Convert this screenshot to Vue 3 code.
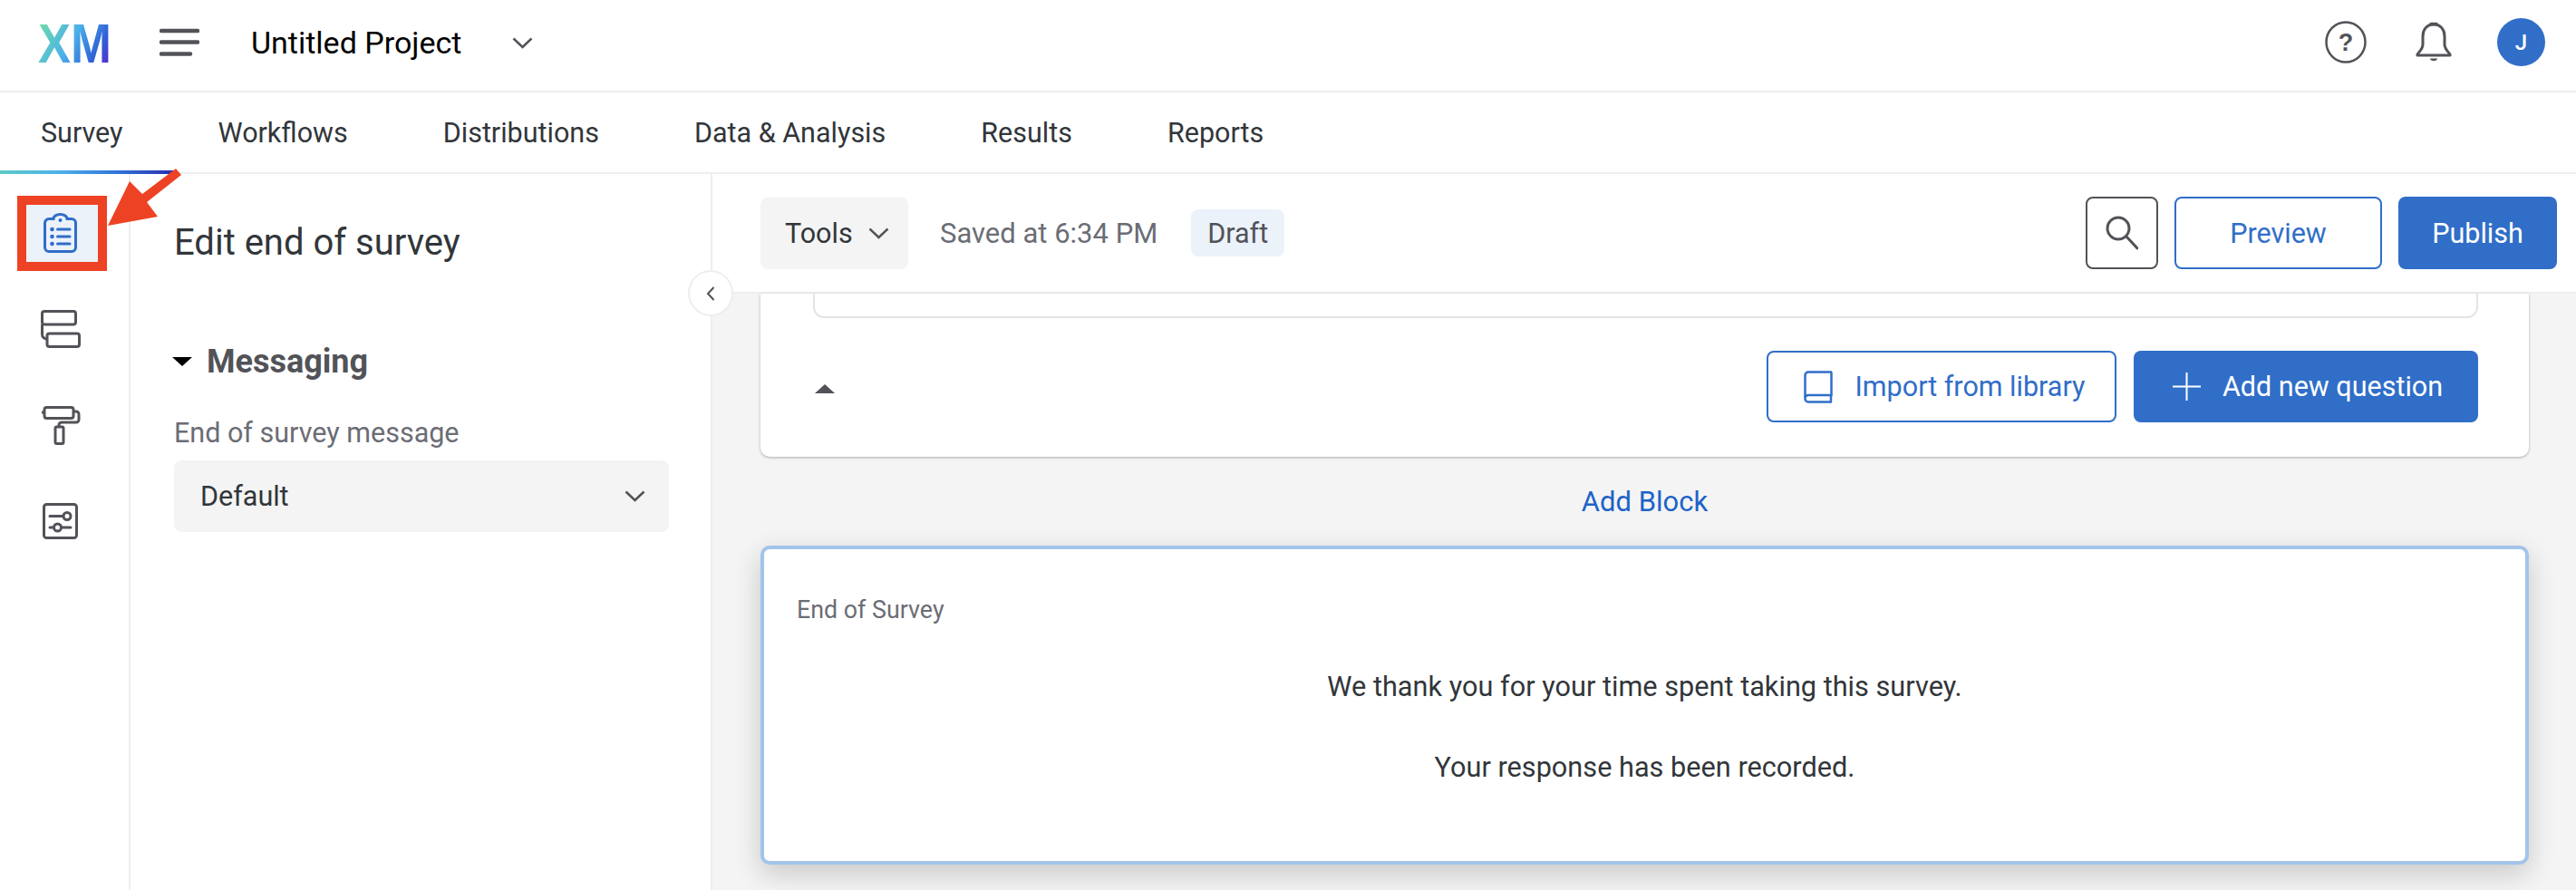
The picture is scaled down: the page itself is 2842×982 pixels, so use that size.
<script setup>
const tabs = ['Survey', 'Workflows', 'Distributions', 'Data & Analysis', 'Results', 'Reports']
</script>

<template>
  <div class="app">
    <header class="topbar">
      <svg class="logo" width="96" height="72" viewBox="0 0 96 72">
        <defs>
          <linearGradient id="xm" gradientUnits="userSpaceOnUse" x1="2" y1="12" x2="80" y2="56">
            <stop offset="0" stop-color="#6edbab" />
            <stop offset="0.45" stop-color="#4bb0ea" />
            <stop offset="0.8" stop-color="#2f5fd6" />
            <stop offset="1" stop-color="#5b27d0" />
          </linearGradient>
        </defs>
        <text x="0" y="56" font-family="Liberation Sans" font-weight="700" font-size="61" textLength="81" lengthAdjust="spacingAndGlyphs" fill="url(#xm)">XM</text>
      </svg>
      <svg class="burger" width="44" height="31" viewBox="0 0 44 31" fill="none" stroke="#525358" stroke-width="4.500" stroke-linecap="round">
        <path d="M2 3H42M2 15.500H42M2 28.500H34" />
      </svg>
      <span class="project">Untitled Project</span>
      <svg class="chev project-chev" width="23" height="13" viewBox="0 0 23 13"><path d="M1.500 1.500L11.500 11L21.500 1.500" /></svg>
      <div class="top-actions">
        <svg width="46" height="47" viewBox="0 0 46 47" fill="none">
          <ellipse cx="23" cy="23.500" rx="21.500" ry="22" stroke="#525358" stroke-width="2.500" />
          <text x="23" y="33" text-anchor="middle" font-family="Liberation Sans" font-weight="700" font-size="27" fill="#525358">?</text>
        </svg>
        <svg class="bell" width="40" height="45" viewBox="0 0 40 45" fill="none" stroke="#525358" stroke-width="3" stroke-linejoin="round">
          <path d="M20 3C12 3 8 9 8 16V25C8 30 4 33 2 36V37H38V36C36 33 32 30 32 25V16C32 9 28 3 20 3Z" />
          <path d="M17 2.500H23" stroke-width="3.500" stroke-linecap="round" />
          <path d="M16 40.500H24C24 44 16 44 16 40.500Z" fill="#525358" stroke="none" />
        </svg>
        <span class="avatar">J</span>
      </div>
    </header>

    <nav class="tabs">
      <span v-for="tab in tabs" :key="tab" class="tab">{{ tab }}</span>
      <i class="tab-line"></i>
    </nav>

    <div class="body">
      <aside class="rail">
        <div class="rail-item">
          <div class="rail-chip">
            <svg width="37" height="44" viewBox="0 0 37 44" fill="none" stroke="#306ec8" stroke-width="3" stroke-linecap="round">
              <path d="M11 6.500H6A4.500 4.500 0 0 0 1.500 11V38A4.500 4.500 0 0 0 6 42.500H31A4.500 4.500 0 0 0 35.500 38V11A4.500 4.500 0 0 0 31 6.500H26C26 3.500 22.500 1.500 18.500 1.500S11 3.500 11 6.500Z" />
              <path d="M15.500 18H29M15.500 26H29M15.500 34H29" />
              <g fill="#306ec8" stroke="none">
                <circle cx="18.500" cy="8" r="2" />
                <circle cx="9.500" cy="18" r="2.300" />
                <circle cx="9.500" cy="26" r="2.300" />
                <circle cx="9.500" cy="34" r="2.300" />
              </g>
            </svg>
          </div>
        </div>
        <div class="rail-item">
          <svg width="44" height="42" viewBox="0 0 44 42" fill="none" stroke="#525358" stroke-width="3">
            <rect x="1.500" y="1.500" width="37" height="14.500" rx="2.500" />
            <rect x="7" y="26" width="35.500" height="14.500" rx="2.500" />
            <path d="M1.500 16V27A5 5 0 0 0 7 32" />
          </svg>
        </div>
        <div class="rail-item">
          <svg width="44" height="43" viewBox="0 0 44 43" fill="none" stroke="#525358" stroke-width="3">
            <rect x="4" y="1.500" width="32" height="12" rx="2.500" />
            <path d="M36 6H39A3 3 0 0 1 42 9V15A3 3 0 0 1 39 18H23A3 3 0 0 0 20 21V23" />
            <rect x="16" y="23" width="9" height="18.500" rx="1.500" />
            <path d="M1 7H4" />
          </svg>
        </div>
        <div class="rail-item">
          <svg width="39" height="40" viewBox="0 0 39 40" fill="none" stroke="#525358" stroke-width="3">
            <rect x="1.500" y="1.500" width="36" height="37" rx="3" />
            <path d="M8 14.500H23M8 27H31" stroke-linecap="round" />
            <circle cx="27" cy="14.500" r="4" fill="#fff" />
            <circle cx="16.500" cy="27" r="4" fill="#fff" />
          </svg>
        </div>
        <svg class="arrow" width="90" height="70" viewBox="0 0 90 70">
          <path d="M0 64L24 15L38 29L75 1L81 8L43 38L55 54Z" fill="#ee4224" />
        </svg>
      </aside>

      <section class="panel">
        <h1 class="panel-title">Edit end of survey</h1>
        <div class="section-head">
          <i class="caret-down"></i>
          <span>Messaging</span>
        </div>
        <label class="field-label">End of survey message</label>
        <div class="select">
          <span>Default</span>
          <svg class="chev" width="23" height="13" viewBox="0 0 23 13"><path d="M1.500 1.500L11.500 11L21.500 1.500" /></svg>
        </div>
        <button class="collapse" aria-label="Collapse">
          <svg width="10" height="18" viewBox="0 0 10 18" fill="none" stroke="#525358" stroke-width="2"><path d="M8.500 2L2 9L8.500 16" /></svg>
        </button>
      </section>

      <main class="main">
        <div class="toolbar">
          <div class="tools">
            <span>Tools</span>
            <svg class="chev" width="23" height="13" viewBox="0 0 23 13"><path d="M1.500 1.500L11.500 11L21.500 1.500" /></svg>
          </div>
          <span class="saved">Saved at 6:34 PM</span>
          <span class="draft">Draft</span>
          <div class="toolbar-right">
            <div class="search-btn">
              <svg width="36" height="38" viewBox="0 0 36 38" fill="none" stroke="#525358" stroke-width="3" stroke-linecap="round">
                <circle cx="14" cy="14" r="12" />
                <path d="M23 23L35 36" />
              </svg>
            </div>
            <div class="btn outline preview">Preview</div>
            <div class="btn solid publish">Publish</div>
          </div>
        </div>

        <div class="scroll">
          <div class="card">
            <div class="inner-box"></div>
            <div class="card-foot">
              <i class="caret-up"></i>
              <div class="card-actions">
                <div class="btn outline import">
                  <svg width="32" height="36" viewBox="0 0 32 36" fill="none" stroke="#306ec8" stroke-width="2.500">
                    <path d="M31 1.500H5A3.500 3.500 0 0 0 1.500 5V31A3.500 3.500 0 0 0 5 34.500H31M1.500 30A3.500 3.500 0 0 1 5 27H30.500V1.500M30 27V34.500" />
                  </svg>
                  <span>Import from library</span>
                </div>
                <div class="btn solid add">
                  <svg width="31" height="31" viewBox="0 0 31 31" stroke="#fff" stroke-width="2"><path d="M15.500 0V31M0 15.500H31" /></svg>
                  <span>Add new question</span>
                </div>
              </div>
            </div>
          </div>

          <div class="add-block">Add Block</div>

          <div class="end-card">
            <div class="end-label">End of Survey</div>
            <p class="end-line first">We thank you for your time spent taking this survey.</p>
            <p class="end-line">Your response has been recorded.</p>
          </div>
        </div>
      </main>
    </div>
  </div>
</template>

<style>
html, body { margin: 0; background: #fff; }
</style>

<style scoped>
.app {
  width: 2842px;
  height: 982px;
  overflow: hidden;
  display: flex;
  flex-direction: column;
  font-family: Roboto, "Noto Sans", sans-serif;
  font-size: 30.500px;
  color: #32363a;
  background: #fff;
}
svg { display: block; flex: none; }
.chev { fill: none; stroke: #525358; stroke-width: 2.500; }

.topbar {
  height: 100px;
  flex: none;
  display: flex;
  align-items: center;
  padding-left: 42px;
  border-bottom: 2px solid #eeeeee;
}
.logo { margin-top: -2px; }
.burger { margin-left: 38px; margin-top: -7px; }
.project {
  margin-left: 57px;
  width: 272px;
  font-size: 34px;
  color: #000;
  margin-top: -6px;
}
.project-chev { margin-left: 16px; margin-top: -6px; }
.top-actions {
  margin-left: auto;
  display: flex;
  align-items: center;
  padding-right: 34px;
  margin-top: -7px;
}
.bell { margin-left: 54px; }
.avatar {
  margin-left: 50px;
  width: 53px;
  height: 53px;
  border-radius: 50%;
  background: #306ec8;
  color: #fff;
  font-size: 24px;
  font-weight: 500;
  display: flex;
  align-items: center;
  justify-content: center;
}

.tabs {
  position: relative;
  height: 88px;
  flex: none;
  display: flex;
  align-items: center;
  gap: 105px;
  padding-left: 45px;
  border-bottom: 2px solid #eeeeee;
}
.tab { color: #32363a; }
.tab-line {
  position: absolute;
  left: 0;
  bottom: -2px;
  width: 192px;
  height: 4px;
  background: linear-gradient(90deg, #5fc9c9 0%, #4bb0ea 35%, #2f6fd6 70%, #2a2fb0 100%);
}

.body { flex: 1; min-height: 0; display: flex; }

.rail {
  position: relative;
  width: 144px;
  flex: none;
  box-sizing: border-box;
  padding: 12px 0 0 29px;
  border-right: 2px solid #eeeeee;
}
.rail-item {
  width: 79px;
  height: 106px;
  box-sizing: border-box;
  padding-right: 4px;
  display: flex;
  align-items: center;
  justify-content: center;
}
.rail-item:first-child { padding-right: 0; }
.rail-chip {
  width: 79px;
  height: 63px;
  box-sizing: border-box;
  padding-right: 4px;
  display: flex;
  align-items: center;
  justify-content: center;
  background: #ebf2fa;
  outline: 10px solid #ee4224;
}
.arrow { position: absolute; left: 119px; top: -7px; z-index: 5; }

.panel {
  position: relative;
  width: 642px;
  flex: none;
  box-sizing: border-box;
  padding: 53px 46px 0 48px;
  border-right: 2px solid #eeeeee;
}
.panel-title {
  margin: 0;
  font-size: 40px;
  font-weight: 400;
  line-height: 46px;
  color: #32363a;
}
.section-head {
  display: flex;
  align-items: center;
  gap: 16px;
  margin-top: 85px;
  font-size: 36px;
  font-weight: 700;
  line-height: 46px;
  color: #525358;
}
.caret-down {
  width: 0;
  height: 0;
  border-left: 11px solid transparent;
  border-right: 11px solid transparent;
  border-top: 10px solid #000;
  margin-left: -2px;
}
.field-label {
  display: block;
  margin-top: 35px;
  line-height: 42px;
  color: #6b6d75;
}
.select {
  margin-top: 9px;
  height: 79px;
  box-sizing: border-box;
  padding: 0 26px 0 29px;
  display: flex;
  align-items: center;
  justify-content: space-between;
  background: #f4f4f4;
  border-radius: 8px;
}
.collapse {
  position: absolute;
  right: -25px;
  top: 106px;
  width: 50px;
  height: 51px;
  padding: 0;
  border: 2px solid #eeeeee;
  border-radius: 50%;
  background: #fff;
  display: flex;
  align-items: center;
  justify-content: center;
  z-index: 4;
}

.main {
  flex: 1;
  min-width: 0;
  display: flex;
  flex-direction: column;
  background: #f4f4f4;
}
.toolbar {
  height: 132px;
  flex: none;
  box-sizing: border-box;
  display: flex;
  align-items: center;
  padding: 0 21px 0 53px;
  background: #fff;
  border-bottom: 2px solid #eeeeee;
}
.tools {
  width: 163px;
  height: 79px;
  box-sizing: border-box;
  padding-left: 27px;
  display: flex;
  align-items: center;
  gap: 17px;
  background: #f4f4f4;
  border-radius: 8px;
}
.saved { margin-left: 35px; color: #6b6d75; font-size: 31px; }
.draft {
  margin-left: 37px;
  height: 52px;
  padding: 0 18px;
  display: flex;
  align-items: center;
  border-radius: 8px;
  background: #ebf2fa;
  color: #525358;
}
.toolbar-right { margin-left: auto; display: flex; align-items: center; }
.search-btn {
  width: 80px;
  height: 80px;
  box-sizing: border-box;
  border: 2.500px solid #525358;
  border-radius: 8px;
  display: flex;
  align-items: center;
  justify-content: center;
}
.btn {
  box-sizing: border-box;
  display: flex;
  align-items: center;
  justify-content: center;
  border-radius: 8px;
}
.btn.outline { border: 2.500px solid #306ec8; color: #306ec8; background: #fff; }
.btn.solid { background: #306ec8; color: #fff; }
.preview { margin-left: 18px; width: 229px; height: 80px; }
.publish { margin-left: 18px; width: 175px; height: 80px; }

.scroll {
  flex: 1;
  min-height: 0;
  display: flex;
  flex-direction: column;
  padding: 0 52px 0 53px;
}
.card {
  height: 180px;
  box-sizing: border-box;
  padding: 0 56px 0 58px;
  background: #fff;
  border-radius: 0 0 10px 10px;
  box-shadow: 0 1px 3px rgba(0, 0, 0, 0.3);
}
.inner-box {
  height: 27px;
  box-sizing: border-box;
  border: 2px solid #e4e4e4;
  border-top: 0;
  border-radius: 0 0 12px 12px;
}
.card-foot {
  display: flex;
  align-items: flex-start;
  justify-content: space-between;
  padding-top: 36px;
}
.caret-up {
  width: 0;
  height: 0;
  margin: 37px 0 0 2px;
  border-left: 11px solid transparent;
  border-right: 11px solid transparent;
  border-bottom: 10px solid #525358;
}
.card-actions { display: flex; gap: 19px; }
.import { width: 386px; height: 79px; gap: 25px; padding-left: 6px; }
.add { width: 380px; height: 79px; gap: 24px; padding-left: 4px; }

.add-block {
  margin-top: 29px;
  margin-bottom: -1px;
  text-align: center;
  line-height: 42px;
  font-size: 31px;
  color: #1d63c9;
}
.end-card {
  margin-top: 28px;
  height: 352px;
  box-sizing: border-box;
  padding: 50px 36px 0;
  background: #fff;
  border: 4px solid #a3c4ea;
  border-radius: 10px;
  box-shadow: 0 10px 30px rgba(0, 0, 0, 0.18);
}
.end-label { font-size: 26.800px; line-height: 34px; color: #6b6d75; }
.end-line {
  margin: 47px 0 0;
  text-align: center;
  line-height: 42px;
  font-size: 30.700px;
  color: #32363a;
}
</style>
